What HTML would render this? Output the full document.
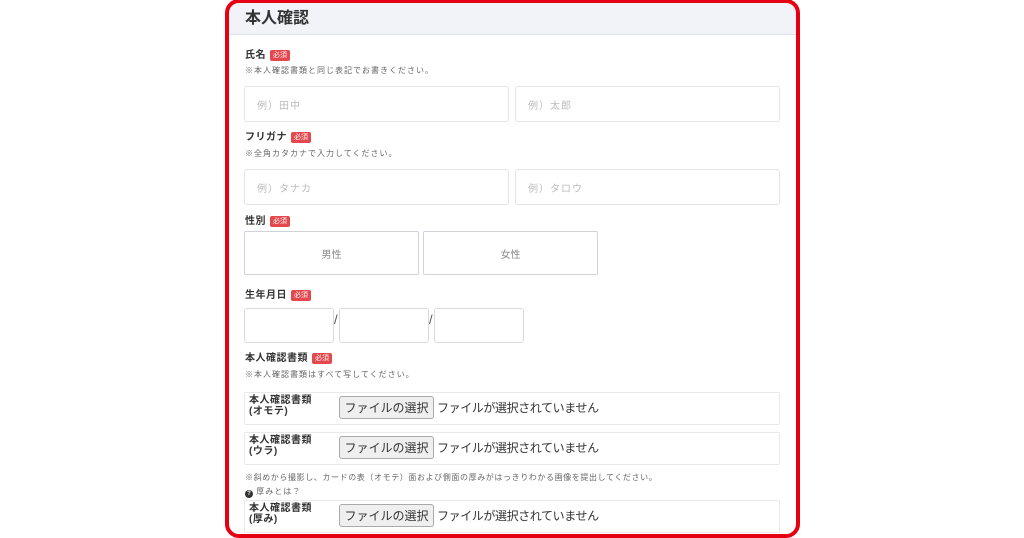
<!DOCTYPE html>
<html><head><meta charset="utf-8"><style>
*{margin:0;padding:0;box-sizing:border-box}
body{width:1024px;height:538px;background:#fff;position:relative;overflow:hidden;font-family:"Liberation Sans","Noto Sans CJK JP",sans-serif;color:#333}
.a{position:absolute}
.frame{left:225px;top:-1px;width:575px;height:539px;border:4px solid #e50012;border-radius:14px}
.hd{left:229px;top:3px;width:567px;height:32px;background:#f1f3f9;border-bottom:1px solid #dde1ea;border-radius:8px 8px 0 0}
.title{left:245px;top:4px;font-size:16px;font-weight:bold;color:#333}
.lb{font-size:10px;font-weight:bold;color:#333;line-height:12px;letter-spacing:0.5px}
.bd{display:inline-block;background:#e4474c;color:#fff;font-size:7px;font-weight:normal;padding:0 3px;border-radius:2px;line-height:11px;margin-left:4px;vertical-align:1px;letter-spacing:0}
.nt{font-size:8px;color:#666;line-height:10px;letter-spacing:1px}
.in{border:1px solid #e2e4e8;border-radius:3px;background:#fff}
.ph{font-size:10px;color:#bbb;padding-left:12px;display:flex;align-items:center;letter-spacing:1px}
.sx{border:1px solid #d0d3d8;border-radius:2px;display:flex;align-items:center;justify-content:center;font-size:10px;color:#888}
.fr{border:1px solid #e8e9ec;border-radius:2px;left:244px;width:536px;height:33px}
.fl{position:absolute;left:4px;top:2px;font-size:10px;font-weight:bold;line-height:11px;color:#333;letter-spacing:0.5px}
.fb{position:absolute;left:94px;top:3px;width:95px;height:23px;border:1px solid #aaa;border-radius:3px;background:#efefef;font-size:12px;display:flex;align-items:center;justify-content:center;color:#333}
.ft{position:absolute;left:192px;top:6px;font-size:12px;color:#333;letter-spacing:-0.4px}
</style></head><body>
<div class="a hd"></div>
<div class="a frame"></div>
<div class="a title">本人確認</div>

<div class="a lb" style="left:245px;top:50px">氏名<span class="bd">必須</span></div>
<div class="a nt" style="left:245px;top:66px">※本人確認書類と同じ表記でお書きください。</div>
<div class="a in ph" style="left:244px;top:86px;width:265px;height:36px">例）田中</div>
<div class="a in ph" style="left:515px;top:86px;width:265px;height:36px">例）太郎</div>

<div class="a lb" style="left:245px;top:132px">フリガナ<span class="bd">必須</span></div>
<div class="a nt" style="left:245px;top:149px">※全角カタカナで入力してください。</div>
<div class="a in ph" style="left:244px;top:169px;width:265px;height:36px">例）タナカ</div>
<div class="a in ph" style="left:515px;top:169px;width:265px;height:36px">例）タロウ</div>

<div class="a lb" style="left:245px;top:216px">性別<span class="bd">必須</span></div>
<div class="a sx" style="left:244px;top:231px;width:175px;height:44px">男性</div>
<div class="a sx" style="left:423px;top:231px;width:175px;height:44px">女性</div>

<div class="a lb" style="left:245px;top:290px">生年月日<span class="bd">必須</span></div>
<div class="a in" style="left:244px;top:308px;width:90px;height:35px;border-color:#d8dade"></div>
<div class="a" style="left:334px;top:312px;font-size:13px;color:#555">/</div>
<div class="a in" style="left:339px;top:308px;width:90px;height:35px;border-color:#d8dade"></div>
<div class="a" style="left:429px;top:312px;font-size:13px;color:#555">/</div>
<div class="a in" style="left:434px;top:308px;width:90px;height:35px;border-color:#d8dade"></div>

<div class="a lb" style="left:245px;top:353px">本人確認書類<span class="bd">必須</span></div>
<div class="a nt" style="left:245px;top:370px">※本人確認書類はすべて写してください。</div>

<div class="a fr" style="top:392px"><div class="fl">本人確認書類<br>(オモテ)</div><div class="fb">ファイルの選択</div><div class="ft">ファイルが選択されていません</div></div>
<div class="a fr" style="top:432px"><div class="fl">本人確認書類<br>(ウラ)</div><div class="fb">ファイルの選択</div><div class="ft">ファイルが選択されていません</div></div>
<div class="a nt" style="left:245px;top:473px;letter-spacing:0.6px">※斜めから撮影し、カードの表（オモテ）面および側面の厚みがはっきりわかる画像を提出してください。</div>
<div class="a nt" style="left:245px;top:487px"><span style="display:inline-block;width:8px;height:8px;border-radius:50%;background:#333;color:#fff;font-size:6px;text-align:center;line-height:8px;font-weight:bold;vertical-align:-1px;letter-spacing:0">?</span> 厚みとは？</div>
<div class="a fr" style="top:500px"><div class="fl">本人確認書類<br>(厚み)</div><div class="fb">ファイルの選択</div><div class="ft">ファイルが選択されていません</div></div>
</body></html>
